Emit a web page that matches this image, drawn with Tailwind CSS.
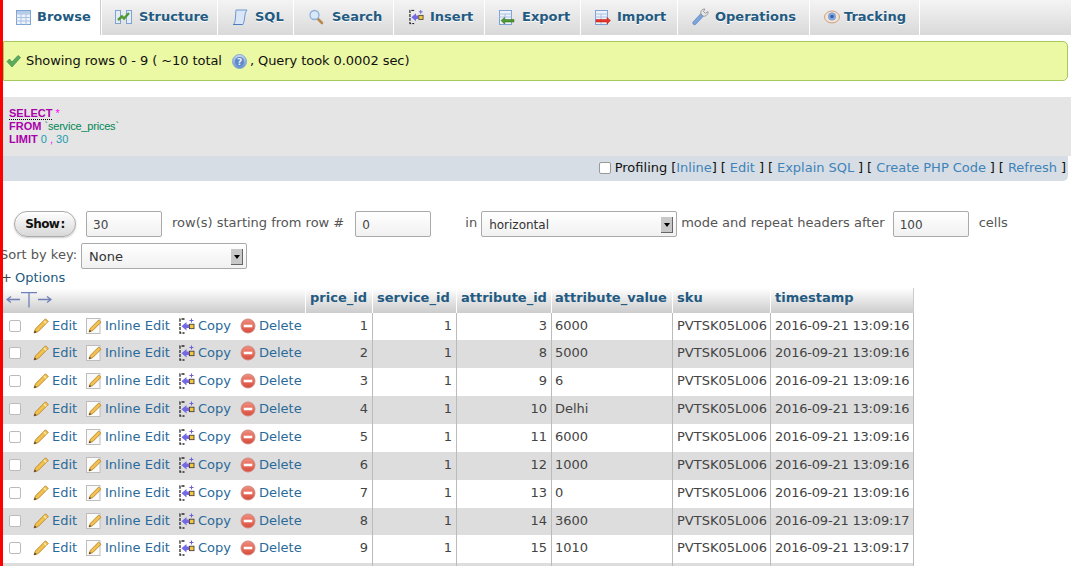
<!DOCTYPE html>
<html lang="en">
<head>
<meta charset="utf-8">
<title>phpMyAdmin</title>
<script src="https://cdn.jsdelivr.net/npm/@tailwindcss/browser@4"></script>
</head>
<body class="bg-white">
<svg class="absolute w-0 h-0" aria-hidden="true">
  <defs>
    <linearGradient id="redg" x1="0" y1="0" x2="0" y2="1"><stop offset="0" stop-color="#f08d80"/><stop offset="1" stop-color="#d94a3a"/></linearGradient>
    <linearGradient id="blueg" x1="0" y1="0" x2="0" y2="1"><stop offset="0" stop-color="#c6d8f0"/><stop offset="1" stop-color="#5f8fd0"/></linearGradient>
    <symbol id="pencil" viewBox="0 0 16 16">
      <path d="M12.500.8 15.200 3.500 5.200 13.500 1 15 2.500 10.800Z" fill="#f2c14e" stroke="#b5862a" stroke-width=".9"/>
      <path d="M11 3 13.300 5.300" stroke="#fff0b8" stroke-width="1.200"/>
      <path d="M1 15 1.800 12.400 3.600 14.200Z" fill="#4a3828"/>
    </symbol>
    <symbol id="inline" viewBox="0 0 16 16">
      <rect x=".5" y=".5" width="13.500" height="15" fill="#fbfbfb" stroke="#bdbdbd"/>
      <path d="M12.700 2 15 4.300 6.800 12.500 3 14 4.500 10.200Z" fill="#f2c14e" stroke="#b5862a" stroke-width=".9"/>
      <path d="M3 14 3.700 11.700 5.300 13.300Z" fill="#4a3828"/>
    </symbol>
    <symbol id="copy" viewBox="0 0 16 16">
      <path d="M5.500 1H1V15H5.500" fill="none" stroke="#2a2a2a" stroke-width="1.300" stroke-dasharray="3 1.200"/>
      <path d="M2.500 8.200 7.500 4V6.500H10V10H7.500V12.500Z" fill="#7468e4"/>
      <rect x="10.500" y="6.200" width="4.500" height="4.500" fill="#f6c63e" stroke="#333" stroke-width=".8"/>
      <path d="M12.500.5v4M10.500 2.500h4" stroke="#6a5fd8" stroke-width="1"/>
    </symbol>
    <symbol id="delete" viewBox="0 0 16 16">
      <circle cx="8" cy="8" r="7" fill="url(#redg)" stroke="#d08a80" stroke-width="1"/>
      <rect x="3.700" y="6.700" width="8.600" height="2.600" fill="#fff"/>
    </symbol>
  </defs>
</svg>

<div class="relative w-[1071px] h-[566px] overflow-hidden font-['DejaVu_Sans',sans-serif] text-[13px] leading-[16px] text-[#444]">
  <div class="absolute left-0 top-0 w-[3px] h-full bg-[#ff0000] z-10"></div>

  <nav class="flex h-[35px] pl-[3px] bg-gradient-to-b from-[#f4f4f4] to-[#d9d9d9] font-bold text-[#235a81] [text-shadow:0_1px_0_#fff]">
    <a class="flex items-center w-[98px] pl-[13px] pb-[1px] gap-[6px] bg-white border-r border-[#ccc]">
      <svg class="w-[15px] h-[15px]" viewBox="0 0 15 15"><rect x=".5" y=".5" width="14" height="14" fill="#eef3fb" stroke="#7ea3d3"/><path d="M.5 4h14M.5 7.500h14M.5 11h14M5 4v10.500M10 4v10.500" stroke="#a9c1e3"/><rect x="1" y="1" width="13" height="3" fill="#b7cce9"/></svg>
      Browse
    </a>
    <a class="flex items-center w-[116px] pl-[13px] pb-[1px] gap-[7px] border-l border-white">
      <svg class="w-[17px] h-[16px]" viewBox="0 0 17 16"><rect x=".5" y="1.500" width="5" height="13" fill="#e4ecf7" stroke="#7ea3d3"/><rect x="11.500" y="1.500" width="5" height="13" fill="#e4ecf7" stroke="#7ea3d3"/><path d="M3 11 7 7.500 9 9.500 14 4" fill="none" stroke="#4f9a33" stroke-width="2.400"/></svg>
      Structure
    </a>
    <a class="flex items-center w-[76px] pl-[14px] pb-[1px] gap-[7px] border-l border-white">
      <svg class="w-[16px] h-[17px]" viewBox="0 0 16 17"><path d="M4 1h11c-1.500 2-2 4-2.300 7-.3 3-.7 5-1.700 7.500H1.500C3 14 3.300 11 3.500 8 3.700 5 3.700 3 4 1Z" fill="#d8e6f8" stroke="#6c97cf"/><path d="M1 15.500h9" stroke="#4b7cc0"/></svg>
      SQL
    </a>
    <a class="flex items-center w-[100px] pl-[14px] pb-[1px] gap-[8px] border-l border-white">
      <svg class="w-[16px] h-[16px]" viewBox="0 0 16 16"><path d="M9.500 9.500 14 14" stroke="#b8894d" stroke-width="2.600" stroke-linecap="round"/><circle cx="6.500" cy="6" r="4.500" fill="#d7e8fa" stroke="#8fb0d6" stroke-width="1.300"/></svg>
      Search
    </a>
    <a class="flex items-center w-[91px] pl-[15px] pb-[1px] gap-[6px] border-l border-white">
      <svg class="w-[15px] h-[16px]" viewBox="0 0 16 16"><use href="#copy"/></svg>
      Insert
    </a>
    <a class="flex items-center w-[96px] pl-[14px] pb-[1px] gap-[7px] border-l border-white">
      <svg class="w-[16px] h-[15px]" viewBox="0 0 16 15"><rect x=".5" y=".5" width="12" height="14" fill="#eef3fb" stroke="#7ea3d3"/><path d="M.5 4h12M.5 7h12M6 4v10" stroke="#a9c1e3"/><path d="M2 10.500 5.500 7.500v2H15v2.500H5.500v2Z" fill="#4f9a33" stroke="#2e6b1f" stroke-width=".5"/></svg>
      Export
    </a>
    <a class="flex items-center w-[97px] pl-[14px] pb-[1px] gap-[6px] border-l border-white">
      <svg class="w-[16px] h-[15px]" viewBox="0 0 16 15"><rect x=".5" y=".5" width="12" height="14" fill="#eef3fb" stroke="#7ea3d3"/><path d="M.5 4h12M.5 7h12M6 4v10" stroke="#a9c1e3"/><path d="M15.500 10.500 12 7.500v2H1v2.500h11v2Z" fill="#e8352a" stroke="#b31c14" stroke-width=".5"/></svg>
      Import
    </a>
    <a class="flex items-center w-[132px] pl-[14px] pb-[1px] gap-[6px] border-l border-white">
      <svg class="w-[17px] h-[18px]" viewBox="0 0 17 18"><path d="M1 14 9 5.500 11.500 8 3.500 16.500C2 17.500.2 15.800 1 14Z" fill="#7ba3dc" stroke="#5c84c0" stroke-width=".7"/><path d="M9 6C8 3.500 10 .8 13 1L11.500 3.500 13.300 5.300 16 3.500C16.500 6.500 13.500 9 11 8Z" fill="#e6e6e6" stroke="#8a8a8a" stroke-width=".8"/></svg>
      Operations
    </a>
    <a class="flex items-center w-[111px] pl-[14px] pb-[1px] gap-[4px] border-x border-white">
      <svg class="w-[16px] h-[14px]" viewBox="0 0 16 14"><ellipse cx="8" cy="7" rx="7.500" ry="6" fill="#f3e3d3" stroke="#cf9f7f"/><circle cx="8" cy="6.500" r="4" fill="#7ea6e0"/><circle cx="8" cy="6.500" r="1.800" fill="#3f5f9f"/></svg>
      Tracking
    </a>
  </nav>

  <div class="flex items-center h-[40px] mt-[6px] ml-[3px] w-[1065px] pl-[2px] bg-[#ebf8a4] border border-[#a6c95c] rounded-r-[5px] text-[#111]">
    <svg class="w-[15px] h-[14px] mr-[5px]" viewBox="0 0 15 14"><path d="M1 7.500 3.500 5 6 8 12 1.500 14.500 3.500 6 13Z" fill="#5cab5f" stroke="#3f8d48" stroke-width=".7"/></svg>
    <span class="tracking-[-0.07px]">Showing rows 0 - 9 ( ~10 total</span>
    <svg class="w-[15px] h-[15px] ml-[10px] mr-[3px]" viewBox="0 0 15 15"><circle cx="7.500" cy="7.500" r="7" fill="url(#blueg)" stroke="#8aa8d0"/><circle cx="7.500" cy="7.500" r="4.500" fill="#5f86c8"/><text x="7.500" y="10.500" text-anchor="middle" font-size="9" font-weight="700" fill="#e8f0fb">?</text></svg>
    <span class="tracking-[-0.07px]">, Query took 0.0002 sec)</span>
  </div>

  <div class="mt-[16px] ml-[3px] h-[59px] pt-[10px] pl-[6px] bg-[#e5e5e5] font-['Liberation_Sans',sans-serif] text-[11px] leading-[13px]">
    <div><span class="font-bold text-[#a0a] border-b border-dotted border-black">SELECT</span> <span class="text-[#f0f]">*</span></div>
    <div><span class="font-bold text-[#a0a]">FROM</span> <span class="text-[#085] tracking-[-0.2px]">`service_prices`</span></div>
    <div><span class="font-bold text-[#a0a]">LIMIT</span> <span class="text-[#1a9bad]">0</span> <span class="text-[#f0f]">,</span> <span class="text-[#1a9bad]">30</span></div>
  </div>
  <div class="flex items-center justify-end ml-[3px] w-[1065px] h-[25px] pr-[2px] pb-[2px] bg-[#d6dde4] rounded-br-[5px] text-[#111] whitespace-pre [word-spacing:-0.2px]">
    <input type="checkbox" class="appearance-none w-[12px] h-[12px] mr-[4px] bg-white border border-[#999] rounded-[2px]"><span>Profiling [<a class="text-[#3f83b8]">Inline</a>] [ <a class="text-[#3f83b8]">Edit</a> ] [ <a class="text-[#3f83b8]">Explain SQL</a> ] [ <a class="text-[#3f83b8]">Create PHP Code</a> ] [ <a class="text-[#3f83b8]">Refresh</a> ]</span>
  </div>

  <div class="flex items-start mt-[30px] h-[26px] ml-[14px] text-[#555]">
    <button class="w-[62px] h-[26px] rounded-full border border-[#aaa] bg-gradient-to-b from-white to-[#d8d8d8] text-[12px] font-bold tracking-[-0.7px] [word-spacing:-2px] text-[#111] shadow-[0_1px_2px_#ccc]">Show :</button>
    <input value="30" class="w-[76px] h-[26px] ml-[10px] px-[6px] pt-[2px] border border-[#aaa] rounded-[2px] bg-gradient-to-b from-white to-[#f1f1f1] text-[12px] text-[#444]">
    <span class="ml-[10px] mt-[4px]">row(s) starting from row #</span>
    <input value="0" class="w-[76px] h-[26px] ml-[11px] px-[6px] pt-[2px] border border-[#aaa] rounded-[2px] bg-gradient-to-b from-white to-[#f1f1f1] text-[12px] text-[#444]">
    <span class="ml-[34px] mt-[4px]">in</span>
    <div class="relative w-[196px] h-[26px] ml-[4px] pl-[7px] pt-[5px] border border-[#aaa] rounded-[2px] bg-gradient-to-b from-white to-[#f1f1f1] text-[12px] text-[#333]">horizontal
      <span class="absolute right-[3px] top-[5px] flex items-center justify-center w-[12px] h-[16px] bg-[#c8c8c8] border-r border-b border-[#666] border-l-white border-t-white"><span class="w-0 h-0 border-x-[3px] border-x-transparent border-t-[4px] border-t-black"></span></span>
    </div>
    <span class="ml-[4px] mt-[4px]">mode and repeat headers after</span>
    <input value="100" class="w-[76px] h-[26px] ml-[8px] px-[6px] pt-[2px] border border-[#aaa] rounded-[2px] bg-gradient-to-b from-white to-[#f1f1f1] text-[12px] text-[#444]">
    <span class="ml-[10px] mt-[4px]">cells</span>
  </div>

  <div class="flex items-start mt-[6px] h-[26px] text-[#555]">
    <span class="mt-[4px]">Sort by key:</span>
    <div class="relative w-[166px] h-[26px] ml-[4px] pl-[7px] pt-[5px] border border-[#aaa] rounded-[2px] bg-gradient-to-b from-white to-[#f1f1f1] text-[#333]">None
      <span class="absolute right-[3px] top-[5px] flex items-center justify-center w-[12px] h-[16px] bg-[#c8c8c8] border-r border-b border-[#666] border-l-white border-t-white"><span class="w-0 h-0 border-x-[3px] border-x-transparent border-t-[4px] border-t-black"></span></span>
    </div>
  </div>
  <div class="h-[19px] pt-[1px] ml-[1px] text-[#235a81] [word-spacing:-1px]"><span class="text-[#444]">+</span> Options</div>

  <table class="ml-[3px] w-[911px] table-fixed border-separate border-spacing-0 whitespace-nowrap">
    <colgroup><col class="w-[303px]"><col class="w-[67px]"><col class="w-[84px]"><col class="w-[95px]"><col class="w-[121px]"><col class="w-[98px]"><col class="w-[143px]"></colgroup>
    <thead>
      <tr class="h-[25px] text-[#235a81] text-left">
        <th class="p-0 bg-gradient-to-b from-white to-[#ccc] border-r border-white">
          <svg class="ml-[3px] mb-[1px] w-[46px] h-[16px]" viewBox="0 0 46 16"><path d="M14 7.500H1M5 4.500 1 7.500 5 10.500M32 7.500H45M41 4.500 45 7.500 41 10.500M15 .7H31M23 .7V15.500" fill="none" stroke="#6f7fb8" stroke-width="1.300"/></svg>
        </th>
        <th class="px-[4px] pb-[5px] font-bold bg-gradient-to-b from-white to-[#ccc] border-r border-white">price_id</th>
        <th class="px-[4px] pb-[5px] font-bold bg-gradient-to-b from-white to-[#ccc] border-r border-white">service_id</th>
        <th class="px-[4px] pb-[5px] font-bold bg-gradient-to-b from-white to-[#ccc] border-r border-white">attribute_id</th>
        <th class="px-[3px] pb-[5px] font-bold bg-gradient-to-b from-white to-[#ccc] border-r border-white">attribute_value</th>
        <th class="px-[4px] pb-[5px] font-bold bg-gradient-to-b from-white to-[#ccc] border-r border-white">sku</th>
        <th class="px-[4px] pb-[5px] font-bold bg-gradient-to-b from-white to-[#ccc] border-r border-[#ccc]">timestamp</th>
      </tr>
    </thead>
    <tbody class="[&_td]:pb-[2px] [&_td:last-child]:tracking-[-0.2px]">
      <tr class="h-[27px] bg-white"><td class="p-0"><div class="flex items-center pl-[6px] text-[#2a6a9a]"><input type="checkbox" class="appearance-none w-[12px] h-[12px] mr-[12px] bg-white border border-[#bbb] rounded-[2px]"><a class="flex items-center gap-[3px] w-[53px]"><svg class="w-[16px] h-[16px]"><use href="#pencil"/></svg>Edit</a><a class="flex items-center gap-[3px] w-[93px]"><svg class="w-[16px] h-[16px]"><use href="#inline"/></svg>Inline Edit</a><a class="flex items-center gap-[3px] w-[61px]"><svg class="w-[16px] h-[16px]"><use href="#copy"/></svg>Copy</a><a class="flex items-center gap-[3px]"><svg class="w-[16px] h-[16px]"><use href="#delete"/></svg>Delete</a></div></td><td class="pr-[4px] text-right border-r border-[#bbb]">1</td><td class="pr-[4px] text-right border-r border-[#bbb]">1</td><td class="pr-[4px] text-right border-r border-[#bbb]">3</td><td class="pl-[3px] border-r border-[#bbb]">6000</td><td class="pl-[4px] border-r border-[#bbb]">PVTSK05L006</td><td class="pl-[4px] border-r border-[#bbb]">2016-09-21 13:09:16</td></tr>
      <tr class="h-[28px] bg-[#ddd]"><td class="p-0"><div class="flex items-center pl-[6px] text-[#2a6a9a]"><input type="checkbox" class="appearance-none w-[12px] h-[12px] mr-[12px] bg-white border border-[#bbb] rounded-[2px]"><a class="flex items-center gap-[3px] w-[53px]"><svg class="w-[16px] h-[16px]"><use href="#pencil"/></svg>Edit</a><a class="flex items-center gap-[3px] w-[93px]"><svg class="w-[16px] h-[16px]"><use href="#inline"/></svg>Inline Edit</a><a class="flex items-center gap-[3px] w-[61px]"><svg class="w-[16px] h-[16px]"><use href="#copy"/></svg>Copy</a><a class="flex items-center gap-[3px]"><svg class="w-[16px] h-[16px]"><use href="#delete"/></svg>Delete</a></div></td><td class="pr-[4px] text-right border-r border-[#bbb]">2</td><td class="pr-[4px] text-right border-r border-[#bbb]">1</td><td class="pr-[4px] text-right border-r border-[#bbb]">8</td><td class="pl-[3px] border-r border-[#bbb]">5000</td><td class="pl-[4px] border-r border-[#bbb]">PVTSK05L006</td><td class="pl-[4px] border-r border-[#bbb]">2016-09-21 13:09:16</td></tr>
      <tr class="h-[28px] bg-white"><td class="p-0"><div class="flex items-center pl-[6px] text-[#2a6a9a]"><input type="checkbox" class="appearance-none w-[12px] h-[12px] mr-[12px] bg-white border border-[#bbb] rounded-[2px]"><a class="flex items-center gap-[3px] w-[53px]"><svg class="w-[16px] h-[16px]"><use href="#pencil"/></svg>Edit</a><a class="flex items-center gap-[3px] w-[93px]"><svg class="w-[16px] h-[16px]"><use href="#inline"/></svg>Inline Edit</a><a class="flex items-center gap-[3px] w-[61px]"><svg class="w-[16px] h-[16px]"><use href="#copy"/></svg>Copy</a><a class="flex items-center gap-[3px]"><svg class="w-[16px] h-[16px]"><use href="#delete"/></svg>Delete</a></div></td><td class="pr-[4px] text-right border-r border-[#bbb]">3</td><td class="pr-[4px] text-right border-r border-[#bbb]">1</td><td class="pr-[4px] text-right border-r border-[#bbb]">9</td><td class="pl-[3px] border-r border-[#bbb]">6</td><td class="pl-[4px] border-r border-[#bbb]">PVTSK05L006</td><td class="pl-[4px] border-r border-[#bbb]">2016-09-21 13:09:16</td></tr>
      <tr class="h-[28px] bg-[#ddd]"><td class="p-0"><div class="flex items-center pl-[6px] text-[#2a6a9a]"><input type="checkbox" class="appearance-none w-[12px] h-[12px] mr-[12px] bg-white border border-[#bbb] rounded-[2px]"><a class="flex items-center gap-[3px] w-[53px]"><svg class="w-[16px] h-[16px]"><use href="#pencil"/></svg>Edit</a><a class="flex items-center gap-[3px] w-[93px]"><svg class="w-[16px] h-[16px]"><use href="#inline"/></svg>Inline Edit</a><a class="flex items-center gap-[3px] w-[61px]"><svg class="w-[16px] h-[16px]"><use href="#copy"/></svg>Copy</a><a class="flex items-center gap-[3px]"><svg class="w-[16px] h-[16px]"><use href="#delete"/></svg>Delete</a></div></td><td class="pr-[4px] text-right border-r border-[#bbb]">4</td><td class="pr-[4px] text-right border-r border-[#bbb]">1</td><td class="pr-[4px] text-right border-r border-[#bbb]">10</td><td class="pl-[3px] border-r border-[#bbb]">Delhi</td><td class="pl-[4px] border-r border-[#bbb]">PVTSK05L006</td><td class="pl-[4px] border-r border-[#bbb]">2016-09-21 13:09:16</td></tr>
      <tr class="h-[28px] bg-white"><td class="p-0"><div class="flex items-center pl-[6px] text-[#2a6a9a]"><input type="checkbox" class="appearance-none w-[12px] h-[12px] mr-[12px] bg-white border border-[#bbb] rounded-[2px]"><a class="flex items-center gap-[3px] w-[53px]"><svg class="w-[16px] h-[16px]"><use href="#pencil"/></svg>Edit</a><a class="flex items-center gap-[3px] w-[93px]"><svg class="w-[16px] h-[16px]"><use href="#inline"/></svg>Inline Edit</a><a class="flex items-center gap-[3px] w-[61px]"><svg class="w-[16px] h-[16px]"><use href="#copy"/></svg>Copy</a><a class="flex items-center gap-[3px]"><svg class="w-[16px] h-[16px]"><use href="#delete"/></svg>Delete</a></div></td><td class="pr-[4px] text-right border-r border-[#bbb]">5</td><td class="pr-[4px] text-right border-r border-[#bbb]">1</td><td class="pr-[4px] text-right border-r border-[#bbb]">11</td><td class="pl-[3px] border-r border-[#bbb]">6000</td><td class="pl-[4px] border-r border-[#bbb]">PVTSK05L006</td><td class="pl-[4px] border-r border-[#bbb]">2016-09-21 13:09:16</td></tr>
      <tr class="h-[28px] bg-[#ddd]"><td class="p-0"><div class="flex items-center pl-[6px] text-[#2a6a9a]"><input type="checkbox" class="appearance-none w-[12px] h-[12px] mr-[12px] bg-white border border-[#bbb] rounded-[2px]"><a class="flex items-center gap-[3px] w-[53px]"><svg class="w-[16px] h-[16px]"><use href="#pencil"/></svg>Edit</a><a class="flex items-center gap-[3px] w-[93px]"><svg class="w-[16px] h-[16px]"><use href="#inline"/></svg>Inline Edit</a><a class="flex items-center gap-[3px] w-[61px]"><svg class="w-[16px] h-[16px]"><use href="#copy"/></svg>Copy</a><a class="flex items-center gap-[3px]"><svg class="w-[16px] h-[16px]"><use href="#delete"/></svg>Delete</a></div></td><td class="pr-[4px] text-right border-r border-[#bbb]">6</td><td class="pr-[4px] text-right border-r border-[#bbb]">1</td><td class="pr-[4px] text-right border-r border-[#bbb]">12</td><td class="pl-[3px] border-r border-[#bbb]">1000</td><td class="pl-[4px] border-r border-[#bbb]">PVTSK05L006</td><td class="pl-[4px] border-r border-[#bbb]">2016-09-21 13:09:16</td></tr>
      <tr class="h-[28px] bg-white"><td class="p-0"><div class="flex items-center pl-[6px] text-[#2a6a9a]"><input type="checkbox" class="appearance-none w-[12px] h-[12px] mr-[12px] bg-white border border-[#bbb] rounded-[2px]"><a class="flex items-center gap-[3px] w-[53px]"><svg class="w-[16px] h-[16px]"><use href="#pencil"/></svg>Edit</a><a class="flex items-center gap-[3px] w-[93px]"><svg class="w-[16px] h-[16px]"><use href="#inline"/></svg>Inline Edit</a><a class="flex items-center gap-[3px] w-[61px]"><svg class="w-[16px] h-[16px]"><use href="#copy"/></svg>Copy</a><a class="flex items-center gap-[3px]"><svg class="w-[16px] h-[16px]"><use href="#delete"/></svg>Delete</a></div></td><td class="pr-[4px] text-right border-r border-[#bbb]">7</td><td class="pr-[4px] text-right border-r border-[#bbb]">1</td><td class="pr-[4px] text-right border-r border-[#bbb]">13</td><td class="pl-[3px] border-r border-[#bbb]">0</td><td class="pl-[4px] border-r border-[#bbb]">PVTSK05L006</td><td class="pl-[4px] border-r border-[#bbb]">2016-09-21 13:09:16</td></tr>
      <tr class="h-[27px] bg-[#ddd]"><td class="p-0"><div class="flex items-center pl-[6px] text-[#2a6a9a]"><input type="checkbox" class="appearance-none w-[12px] h-[12px] mr-[12px] bg-white border border-[#bbb] rounded-[2px]"><a class="flex items-center gap-[3px] w-[53px]"><svg class="w-[16px] h-[16px]"><use href="#pencil"/></svg>Edit</a><a class="flex items-center gap-[3px] w-[93px]"><svg class="w-[16px] h-[16px]"><use href="#inline"/></svg>Inline Edit</a><a class="flex items-center gap-[3px] w-[61px]"><svg class="w-[16px] h-[16px]"><use href="#copy"/></svg>Copy</a><a class="flex items-center gap-[3px]"><svg class="w-[16px] h-[16px]"><use href="#delete"/></svg>Delete</a></div></td><td class="pr-[4px] text-right border-r border-[#bbb]">8</td><td class="pr-[4px] text-right border-r border-[#bbb]">1</td><td class="pr-[4px] text-right border-r border-[#bbb]">14</td><td class="pl-[3px] border-r border-[#bbb]">3600</td><td class="pl-[4px] border-r border-[#bbb]">PVTSK05L006</td><td class="pl-[4px] border-r border-[#bbb]">2016-09-21 13:09:17</td></tr>
      <tr class="h-[28px] bg-white"><td class="p-0"><div class="flex items-center pl-[6px] text-[#2a6a9a]"><input type="checkbox" class="appearance-none w-[12px] h-[12px] mr-[12px] bg-white border border-[#bbb] rounded-[2px]"><a class="flex items-center gap-[3px] w-[53px]"><svg class="w-[16px] h-[16px]"><use href="#pencil"/></svg>Edit</a><a class="flex items-center gap-[3px] w-[93px]"><svg class="w-[16px] h-[16px]"><use href="#inline"/></svg>Inline Edit</a><a class="flex items-center gap-[3px] w-[61px]"><svg class="w-[16px] h-[16px]"><use href="#copy"/></svg>Copy</a><a class="flex items-center gap-[3px]"><svg class="w-[16px] h-[16px]"><use href="#delete"/></svg>Delete</a></div></td><td class="pr-[4px] text-right border-r border-[#bbb]">9</td><td class="pr-[4px] text-right border-r border-[#bbb]">1</td><td class="pr-[4px] text-right border-r border-[#bbb]">15</td><td class="pl-[3px] border-r border-[#bbb]">1010</td><td class="pl-[4px] border-r border-[#bbb]">PVTSK05L006</td><td class="pl-[4px] border-r border-[#bbb]">2016-09-21 13:09:17</td></tr>
      <tr class="h-[28px] bg-[#ddd]"><td class="p-0"></td><td class="border-r border-[#bbb]"></td><td class="border-r border-[#bbb]"></td><td class="border-r border-[#bbb]"></td><td class="border-r border-[#bbb]"></td><td class="border-r border-[#bbb]"></td><td class="border-r border-[#bbb]"></td></tr>
    </tbody>
  </table>
</div>
</body>
</html>
